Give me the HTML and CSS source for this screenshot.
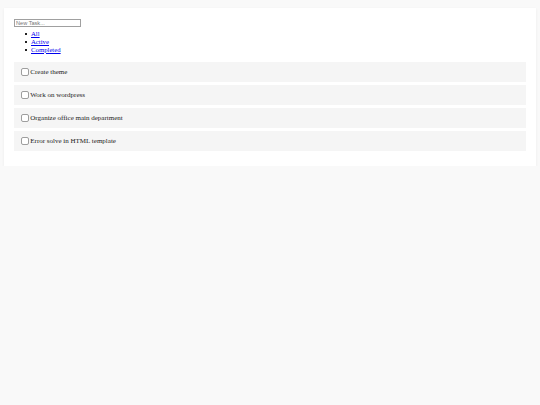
FILE: index.html
```html
<!DOCTYPE html>
<html>
<head>
<meta charset="utf-8">
<link rel="stylesheet" href="styles.css">
</head>
<body>
<div class="card">
  <input class="new-task" type="text" placeholder="New Task...">
  <ul class="filters">
    <li><a href="#">All</a></li>
    <li><a href="#">Active</a></li>
    <li><a href="#">Completed</a></li>
  </ul>
  <div class="tasks">
    <label class="task"><input type="checkbox" class="check"><span>Create theme</span></label>
    <label class="task"><input type="checkbox" class="check"><span>Work on wordpress</span></label>
    <label class="task"><input type="checkbox" class="check"><span>Organize office main department</span></label>
    <label class="task"><input type="checkbox" class="check"><span>Error solve in HTML template</span></label>
  </div>
</div>
</body>
</html>
```
FILE: styles.css
```css
html, body {
  margin: 0;
  padding: 0;
  background: #f9f9f9;
  font-family: "Liberation Serif", "Times New Roman", serif;
  font-size: 6.75px;
  color: #222;
}
.card {
  margin: 8px 4px 0 4px;
  background: #fff;
  box-shadow: 0 1px 3px rgba(0, 0, 0, 0.06);
  padding: 11px 10px 14.5px 10px;
  display: flex;
  flex-direction: column;
  align-items: stretch;
}
.new-task {
  align-self: flex-start;
  box-sizing: border-box;
  width: 67px;
  height: 8px;
  margin: 0;
  padding: 0 1px;
  border: 1px solid #a0a0a0;
  border-radius: 0;
  font-family: "Liberation Sans", Arial, sans-serif;
  font-size: 5.6px;
  color: #333;
  outline: none;
}
.new-task::placeholder {
  color: #767676;
}
.filters {
  margin: 3.2px 0 8.4px 0;
  padding-left: 17px;
  line-height: 7.7px;
  list-style: none;
}
.filters li {
  position: relative;
}
.filters li::before {
  content: "";
  position: absolute;
  left: -6px;
  top: 3.2px;
  width: 2px;
  height: 2px;
  background: #222;
}
.filters a {
  color: #0000ee;
}
.tasks {
  display: flex;
  flex-direction: column;
  gap: 2.6px;
}
.task {
  display: flex;
  align-items: center;
  height: 20.4px;
  background: #f5f5f5;
  padding-left: 6.5px;
  color: #222;
  font-size: 7px;
}
.check {
  appearance: none;
  -webkit-appearance: none;
  box-sizing: border-box;
  width: 8px;
  height: 8px;
  margin: 0 1.8px 0 0;
  border: 0.8px solid #9e9e9e;
  border-radius: 2px;
  background: #fff;
}
```
